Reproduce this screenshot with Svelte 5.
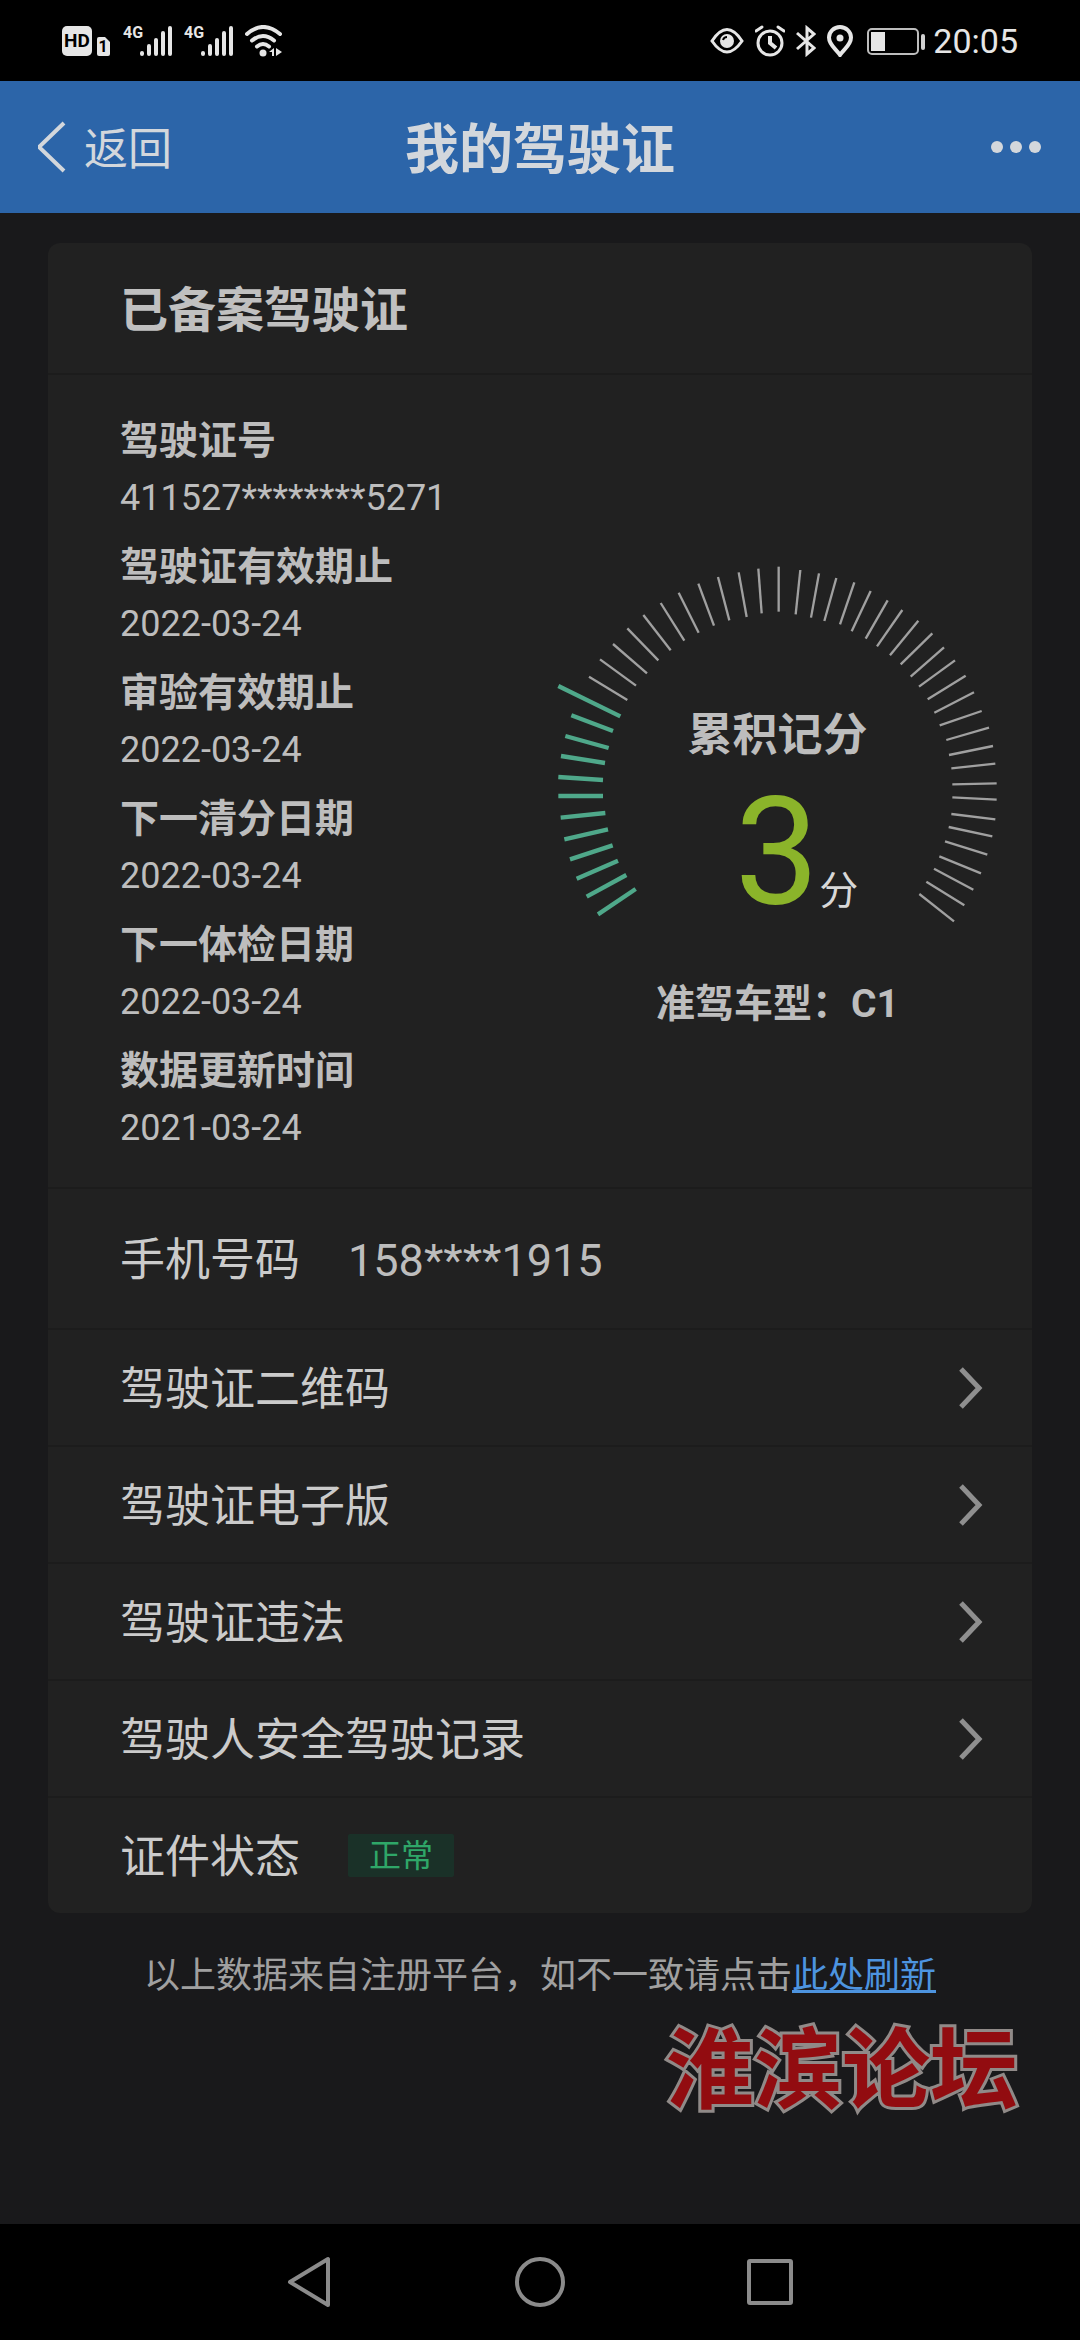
<script>
	const records = [
		{ label: '驾驶证号', value: '411527********5271' },
		{ label: '驾驶证有效期止', value: '2022-03-24' },
		{ label: '审验有效期止', value: '2022-03-24' },
		{ label: '下一清分日期', value: '2022-03-24' },
		{ label: '下一体检日期', value: '2022-03-24' },
		{ label: '数据更新时间', value: '2021-03-24' }
	];

	const links = ['驾驶证二维码', '驾驶证电子版', '驾驶证违法', '驾驶人安全驾驶记录'];

	// dial ticks, outer end then inner end
	const scored = [
		[204, 1123, 317, 1047], [170, 1070, 289, 1005], [140, 1016, 264, 962],
		[120, 958, 248, 916], [103, 898, 234, 868], [92, 833, 226, 819],
		[85, 768, 219, 768], [85, 711, 219, 720], [93, 648, 225, 669],
		[106, 588, 236, 624], [124, 526, 249, 573], [85, 438, 271, 529]
	];
	const rest = [
		[177, 410, 292, 480], [210, 358, 318, 437], [249, 312, 351, 400],
		[292, 265, 385, 361], [340, 225, 422, 331], [392, 189, 463, 302],
		[446, 158, 506, 278], [505, 131, 552, 257], [564, 111, 598, 241],
		[626, 97, 650, 231], [685, 86, 695, 220], [746, 80, 746, 215],
		[811, 90, 797, 223], [867, 100, 843, 233], [919, 114, 883, 243],
		[973, 127, 930, 253], [1022, 153, 965, 274], [1073, 181, 1007, 296],
		[1117, 210, 1041, 319], [1165, 242, 1080, 346], [1207, 280, 1112, 373],
		[1242, 322, 1142, 410], [1275, 361, 1167, 440], [1307, 407, 1193, 478],
		[1332, 457, 1213, 518], [1355, 513, 1229, 556], [1377, 563, 1249, 600],
		[1389, 618, 1257, 645], [1396, 671, 1264, 685], [1400, 730, 1267, 733],
		[1400, 779, 1267, 772], [1396, 838, 1264, 822], [1387, 889, 1256, 861],
		[1372, 944, 1245, 904], [1353, 1000, 1228, 949], [1330, 1049, 1212, 986],
		[1303, 1096, 1189, 1025], [1272, 1144, 1168, 1062]
	];
</script>

<div class="screen">
	<div class="status">
		<div class="left">
			<svg width="50" height="32" viewBox="0 0 50 32">
				<rect x="0" y="1" width="30" height="30" rx="5" fill="#e6e6e6" />
				<text x="15" y="22" text-anchor="middle" class="hd-text">HD</text>
				<path d="M35 14q0-2 2-2h6l5 5v12q0 2-2 2h-9q-2 0-2-2z" fill="#e6e6e6" />
				<text x="41" y="27" text-anchor="middle" class="sim-text">1</text>
			</svg>
			{#each [1, 2] as sim (sim)}
				<svg width="50" height="40" viewBox="0 -4 50 40">
					<text x="0" y="13" class="net-text">4G</text>
					<g stroke="#e6e6e6" stroke-width="4" stroke-linecap="round">
						<path d="M19 28v1M26 21v8M33 15v14M40 8v21M47 3v26" />
					</g>
				</svg>
			{/each}
			<svg width="38" height="32" viewBox="0 0 38 32">
				<g fill="none" stroke="#e6e6e6" stroke-width="4" stroke-linecap="round">
					<path d="M2 9Q18-5 35 9M7 15.500q11-9 22 0M12 21.500q6-5 12 0" />
				</g>
				<circle cx="18" cy="28" r="3.500" fill="#e6e6e6" />
				<path d="M24 27l5-4v8h-2v-4zM31 23v8l6-4z" fill="#e6e6e6" />
			</svg>
		</div>
		<div class="right">
			<svg width="34" height="32" viewBox="0 0 34 32">
				<path d="M2 16Q17-7 32 16Q17 38 2 16z" fill="none" stroke="#e6e6e6" stroke-width="3" />
				<circle cx="17" cy="16" r="7" fill="#e6e6e6" />
				<path d="M13 15q1-3 4-3" fill="none" stroke="#000" stroke-width="2" />
			</svg>
			<svg width="30" height="32" viewBox="0 0 30 32">
				<g fill="none" stroke="#e6e6e6" stroke-width="3">
					<circle cx="15" cy="18" r="12" />
					<path d="M15 11v7l6 5" stroke-width="4" />
					<path d="M1 6l6-4M29 6l-6-4" stroke-linecap="round" />
				</g>
			</svg>
			<svg width="20" height="32" viewBox="0 0 20 32">
				<path d="M1 8l17 15-7 6V3l7 6L1 24" fill="none" stroke="#e6e6e6" stroke-width="3" />
			</svg>
			<svg width="26" height="32" viewBox="0 0 26 32">
				<path d="M13 30C9 24 2 20 2 12.500a11 10.500 0 0 1 22 0C24 20 17 24 13 30z" fill="none" stroke="#e6e6e6" stroke-width="4" />
				<circle cx="13" cy="13" r="3.500" fill="#e6e6e6" />
			</svg>
			<svg class="battery" width="60" height="32" viewBox="0 0 60 32">
				<rect x="2" y="4" width="50" height="25" rx="4" fill="none" stroke="#bdbdbd" stroke-width="2" />
				<rect x="5" y="7" width="14" height="19" fill="#e6e6e6" />
				<rect x="55" y="9" width="4" height="16" rx="2" fill="#d0d0d0" />
			</svg>
			<time>20:05</time>
		</div>
	</div>

	<header>
		<button class="back">
			<svg width="28" height="52" viewBox="2 0 28 52">
				<path d="M28 2L3 26l25 24" fill="none" stroke="currentColor" stroke-width="4" />
			</svg>
			<span>返回</span>
		</button>
		<h1>我的驾驶证</h1>
		<button class="more" aria-label="更多">
			<svg width="52" height="14" viewBox="0 0 52 14">
				<circle cx="7" cy="7" r="6" /><circle cx="26" cy="7" r="6" /><circle cx="45" cy="7" r="6" />
			</svg>
		</button>
	</header>

	<main>
		<section class="card">
			<h2>已备案驾驶证</h2>

			<div class="detail">
				<dl>
					{#each records as record (record.label)}
						<div class="record">
							<dt>{record.label}</dt>
							<dd>{record.value}</dd>
						</div>
					{/each}
				</dl>

				<div class="score">
					<div class="gauge">
						<svg width="445" height="360" viewBox="75 75 1335 1080">
							{#each rest as [x1, y1, x2, y2]}
								<line {x1} {y1} {x2} {y2} stroke="#a0a0a0" stroke-width="7" />
							{/each}
							{#each scored as [x1, y1, x2, y2]}
								<line {x1} {y1} {x2} {y2} stroke="#4fa88a" stroke-width="13" />
							{/each}
						</svg>
						<div class="reading">
							<h3>累积记分</h3>
							<p><strong>3</strong><span>分</span></p>
						</div>
					</div>
					<p class="vehicle">准驾车型：C1</p>
				</div>
			</div>

			<div class="row phone">
				<span>手机号码</span>
				<span class="number">158****1915</span>
			</div>
			{#each links as link (link)}
				<a class="row" href="#top">
					<span>{link}</span>
					<svg width="26" height="44" viewBox="0 0 26 44">
						<path d="M3 3l18 19L3 41" fill="none" stroke="#8f8f8f" stroke-width="5" />
					</svg>
				</a>
			{/each}
			<div class="row">
				<span>证件状态</span>
				<em class="badge">正常</em>
			</div>
		</section>

		<p class="note">以上数据来自注册平台，如不一致请点击<a href="#top">此处刷新</a></p>
		<p class="mark">淮滨论坛</p>
	</main>

	<nav>
		<button aria-label="返回键">
			<svg width="50" height="54" viewBox="0 0 50 54">
				<path d="M5 27L43 4v46z" />
			</svg>
		</button>
		<button aria-label="主屏幕">
			<svg width="50" height="54" viewBox="0 0 50 54">
				<circle cx="25" cy="27" r="23" />
			</svg>
		</button>
		<button aria-label="最近任务">
			<svg width="50" height="54" viewBox="0 0 50 54">
				<rect x="4" y="6" width="42" height="42" rx="1" />
			</svg>
		</button>
	</nav>
</div>

<style>
	:global(body) {
		margin: 0;
		background: #19191b;
	}

	.screen {
		display: flex;
		flex-direction: column;
		min-height: 100vh;
		font-family: Roboto, "Noto Sans CJK SC", sans-serif;
		color: #cbcbcb;
	}

	h1,
	h2,
	h3,
	p,
	dl,
	dd {
		margin: 0;
	}

	svg {
		display: block;
		flex: none;
	}

	button {
		padding: 0;
		border: 0;
		background: none;
		color: inherit;
		font: inherit;
	}

	.status {
		display: flex;
		align-items: center;
		justify-content: space-between;
		height: 81px;
		padding: 0 62px;
		background: #000;
	}

	.left,
	.right {
		display: flex;
		align-items: center;
		gap: 11px;
	}

	.hd-text {
		font-size: 19px;
		font-weight: 700;
	}

	.sim-text {
		font-size: 16px;
		font-weight: 700;
	}

	.net-text {
		font-size: 16px;
		font-weight: 700;
		fill: #e6e6e6;
	}

	.battery {
		margin: 0 -4px 0 2px;
	}

	time {
		font-size: 34px;
		line-height: 40px;
		color: #e6e6e6;
	}

	header {
		display: grid;
		grid-template-columns: 1fr auto 1fr;
		align-items: center;
		height: 132px;
		padding: 0 38px;
		background: #2c65a9;
		color: #d3d7dc;
	}

	.back {
		display: flex;
		align-items: center;
		gap: 18px;
		font-size: 44px;
		line-height: 60px;
	}

	.back span {
		padding-top: 6px;
	}

	h1 {
		padding-top: 8px;
		font-size: 54px;
		line-height: 72px;
		font-weight: 700;
	}

	.more {
		justify-self: end;
		fill: #d3d7dc;
	}

	main {
		flex: 1;
		padding: 30px 48px;
	}

	.card {
		border-radius: 12px;
		background: #212121;
	}

	h2 {
		padding: 6px 72px 0;
		border-bottom: 2px solid #1c1c1c;
		font-size: 48px;
		line-height: 124px;
		font-weight: 700;
		color: #c0c0c0;
	}

	.detail {
		display: flex;
		justify-content: space-between;
		padding: 38px 32px 30px 72px;
	}

	.record {
		margin-bottom: 12px;
	}

	.record:last-child {
		margin-bottom: 0;
	}

	dt,
	dd {
		line-height: 57px;
		color: #bdbdbd;
	}

	dt {
		font-size: 39px;
		font-weight: 700;
	}

	dd {
		font-size: 36px;
	}

	.score {
		margin-top: 152px;
		text-align: center;
	}

	.gauge {
		display: grid;
	}

	.gauge > * {
		grid-area: 1 / 1;
	}

	.reading {
		padding-top: 141px;
	}

	h3 {
		font-size: 45px;
		line-height: 60px;
		font-weight: 700;
		color: #bdbdbd;
	}

	.reading p {
		display: flex;
		align-items: baseline;
		justify-content: center;
		padding: 12px 0 0 38px;
	}

	strong {
		font-size: 150px;
		line-height: 150px;
		font-weight: 400;
		color: #8bb42a;
	}

	.reading span {
		font-size: 39px;
		line-height: 57px;
		color: #d8d8d8;
	}

	.vehicle {
		margin-top: 48px;
		font-size: 39px;
		line-height: 57px;
		font-weight: 700;
		color: #bdbdbd;
	}

	.row {
		display: flex;
		align-items: center;
		gap: 48px;
		height: 115px;
		padding: 0 48px 0 72px;
		border-top: 2px solid #1c1c1c;
		font-size: 45px;
		line-height: 60px;
		color: inherit;
		text-decoration: none;
	}

	.row span {
		padding-top: 5px;
	}

	.row svg {
		margin-left: auto;
	}

	.phone {
		height: 139px;
	}

	.number {
		color: #bdbdbd;
	}

	.badge {
		padding: 2px 21px 0;
		border-radius: 2px;
		background: #1a3128;
		font-size: 32px;
		font-style: normal;
		line-height: 41px;
		color: #2fa768;
	}

	.note {
		margin-top: 36px;
		font-size: 36px;
		line-height: 54px;
		text-align: center;
		color: #a0a0a0;
	}

	.note a {
		color: #4d94e0;
		text-underline-offset: 2px;
	}

	.mark {
		padding: 8px 14px 0;
		font-family: "Noto Sans CJK SC", sans-serif;
		font-size: 88px;
		line-height: 104px;
		font-weight: 700;
		text-align: right;
		color: #920c10;
		-webkit-text-stroke: 6px #908a88;
		paint-order: stroke fill;
	}

	nav {
		display: flex;
		align-items: center;
		justify-content: center;
		gap: 180px;
		height: 116px;
		background: #000;
	}

	nav svg {
		fill: none;
		stroke: #8b8b8b;
		stroke-width: 4;
		stroke-linejoin: round;
	}
</style>
